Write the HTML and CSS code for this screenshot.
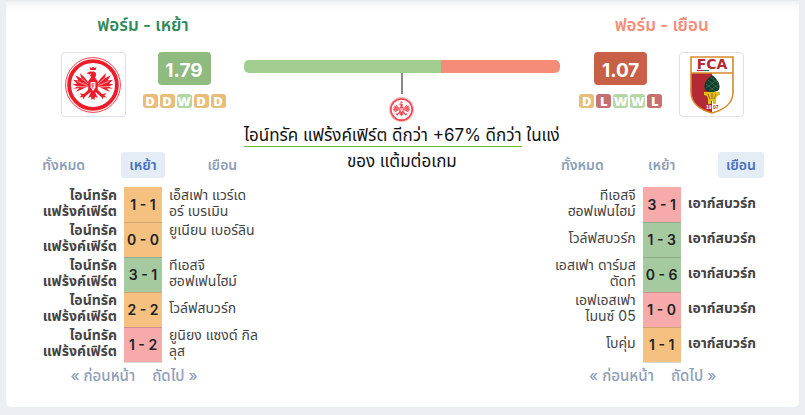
FILE: index.html
```html
<!DOCTYPE html>
<html lang="th">
<head>
  <meta charset="UTF-8" />
  <meta name="viewport" content="width=device-width, initial-scale=1" />
  <title>ฟอร์ม - เหย้า / เยือน</title>
  <link rel="stylesheet" href="styles.css">
</head>
<body>
  <!-- shared club crest -->
  <svg class="sprite" aria-hidden="true">
    <symbol id="crest-sge" viewBox="0 0 56 56">
      <circle cx="28" cy="28" r="27.4" fill="#fff" stroke="#ee2a35" stroke-width="0.9"/>
      <circle cx="28" cy="28" r="23.9" fill="#fff" stroke="#ed1c2b" stroke-width="3.8"/>
      <g fill="#ed1c2b">
        <path d="M24.6 10l1.6 1 1.8-1.3 1.8 1.3 1.6-1-.6 3h-5.6z"/>
        <path d="M21.5 16.2l3.4-1.8h3.6c2 .5 3 2 2.6 3.8l-1 2.5 2.6 3.3v9L28 38l-4.8-5v-9l2.8-3.2-.7-2.6z"/>
        <path d="M23.5 25.5L20 21l-5-5 1.2 5.2-6-2.9 3.2 5.2-5.4-.7 4 3.8-4.3.8 4.8 2.1-4.3 2.2 6-.4-3.4 3.6 6.2-2.6L24 29z"/>
        <path d="M32.5 25.5L36 21l5-5-1.2 5.2 6-2.9-3.2 5.2 5.4-.7-4 3.8 4.3.8-4.8 2.1 4.3 2.2-6-.4 3.4 3.6-6.2-2.6L32 29z"/>
        <path d="M24 32l-5 5-4.6-.8 2.2 2.3-2.4 2.1 3.5-.5.3 2.5 2-2.9 6-5.2z"/>
        <path d="M32 32l5 5 4.6-.8-2.2 2.3 2.4 2.1-3.5-.5-.3 2.5-2-2.9-6-5.2z"/>
        <path d="M26 35l-2.8 6 2.9-1.3.4 3.5 1.5-1.8 1.5 1.8.4-3.5 2.9 1.3L30 35z"/>
      </g>
      <g stroke="#fff" stroke-width="0.6" fill="none">
        <path d="M23 27l-8-7M22.500 28.500l-10-4M22 30l-10-.5M33 27l8-7M33.500 28.500l10-4M34 30l10-.5M23 17.300h3.200"/>
      </g>
      <path d="M25.600 25h4.800v5.500L28 34l-2.400-3.500z" fill="#fff"/>
      <path d="M29.400 26.700h-2.200v5M27.200 28.900h1.800" fill="none" stroke="#ed1c2b" stroke-width="0.8"/>
    </symbol>
  </svg>

  <main class="card">
    <section class="team home">
      <h2 class="title">ฟอร์ม - เหย้า</h2>
      <div class="summary">
        <div class="logo">
          <svg width="56" height="58" role="img" aria-label="ไอน์ทรัค แฟร้งค์เฟิร์ต"><use href="#crest-sge"/></svg>
        </div>
        <div class="rating">
          <div class="points">1.79</div>
          <div class="form">
            <span class="d">D</span><span class="d">D</span><span class="w">W</span><span class="d">D</span><span class="d">D</span>
          </div>
        </div>
      </div>

      <div class="tabs">
        <button type="button">ทั้งหมด</button>
        <button type="button" class="active">เหย้า</button>
        <button type="button">เยือน</button>
      </div>

      <table class="matches">
        <tr><td class="own">ไอน์ทรัค<br>แฟร้งค์เฟิร์ต</td><td class="score draw">1 - 1</td><td>เอ็สเฟา แวร์เด<br>อร์ เบรเมิน</td></tr>
        <tr><td class="own">ไอน์ทรัค<br>แฟร้งค์เฟิร์ต</td><td class="score draw">0 - 0</td><td class="top">ยูเนียน เบอร์ลิน</td></tr>
        <tr><td class="own">ไอน์ทรัค<br>แฟร้งค์เฟิร์ต</td><td class="score win">3 - 1</td><td>ทีเอสจี<br>ฮอฟเฟนไฮม์</td></tr>
        <tr><td class="own">ไอน์ทรัค<br>แฟร้งค์เฟิร์ต</td><td class="score draw">2 - 2</td><td>โวล์ฟสบวร์ก</td></tr>
        <tr><td class="own">ไอน์ทรัค<br>แฟร้งค์เฟิร์ต</td><td class="score loss">1 - 2</td><td>ยูนิยง แซงต์ กิล<br>ลุส</td></tr>
      </table>

      <nav class="pager">
        <a href="#">« ก่อนหน้า</a>
        <a href="#">ถัดไป »</a>
      </nav>
    </section>

    <section class="compare">
      <div class="bar"><div class="bar-home"></div><div class="bar-away"></div></div>
      <div class="marker"></div>
      <svg class="mini" width="25" height="25" aria-hidden="true"><use href="#crest-sge"/></svg>
      <p><span>ไอน์ทรัค แฟร้งค์เฟิร์ต ดีกว่า +67% ดีกว่า</span> ในแง่<br>ของ แต้มต่อเกม</p>
    </section>

    <section class="team away">
      <h2 class="title">ฟอร์ม - เยือน</h2>
      <div class="summary">
        <div class="rating">
          <div class="points">1.07</div>
          <div class="form">
            <span class="d">D</span><span class="l">L</span><span class="w">W</span><span class="w">W</span><span class="l">L</span>
          </div>
        </div>
        <div class="logo">
          <svg width="44" height="58" viewBox="0 0 44 58" role="img" aria-label="เอาก์สบวร์ก">
            <path d="M1 1h42v35c0 11-9 18-21 21C10 54 1 47 1 36z" fill="#fff"/>
            <path d="M1 17h21v40C10 54 1 47 1 36z" fill="#b32a34"/>
            <path d="M1 1h42v35c0 11-9 18-21 21C10 54 1 47 1 36zM1 17h42" fill="none" stroke="#d88a2b" stroke-width="1.600"/>
            <text class="fca" x="22" y="13" text-anchor="middle">FCA</text>
            <path d="M7 14.500h6" stroke="#b32a34" stroke-width="1.200"/>
            <path d="M13 14.500h6" stroke="#168653" stroke-width="1.200"/>
            <path d="M22 19c5 4 8 8 7.500 12.500C29.200 35 26 36 22 36s-7.200-1-7.500-4.500C14 27 17 23 22 19z" fill="#123e2c"/>
            <path d="M18 24l10 8M16 28l9 7M27 24l-11 8M29 28l-10 7M20 21l8 6" stroke="#42745a" stroke-width="0.700"/>
            <path d="M14 36h16v3l-3 1-1 3v5h-3v-3h-2v3h-3v-5l-1-3-3-1z" fill="#e6bd18"/>
            <path d="M18 38l2 5M26 38l-2 5M22 37v6" stroke="#7b5420" stroke-width="0.800"/>
            <text class="year left" x="16" y="53">19</text>
            <text class="year" x="23" y="53">07</text>
          </svg>
        </div>
      </div>

      <div class="tabs">
        <button type="button">ทั้งหมด</button>
        <button type="button">เหย้า</button>
        <button type="button" class="active">เยือน</button>
      </div>

      <table class="matches">
        <tr><td>ทีเอสจี<br>ฮอฟเฟนไฮม์</td><td class="score loss">3 - 1</td><td class="own">เอาก์สบวร์ก</td></tr>
        <tr><td>โวล์ฟสบวร์ก</td><td class="score win">1 - 3</td><td class="own">เอาก์สบวร์ก</td></tr>
        <tr><td>เอสเฟา ดาร์มส<br>ตัดท์</td><td class="score win">0 - 6</td><td class="own">เอาก์สบวร์ก</td></tr>
        <tr><td>เอฟเอสเฟา<br>ไมนซ์ 05</td><td class="score loss">1 - 0</td><td class="own">เอาก์สบวร์ก</td></tr>
        <tr><td>โบคุ่ม</td><td class="score draw">1 - 1</td><td class="own">เอาก์สบวร์ก</td></tr>
      </table>

      <nav class="pager">
        <a href="#">« ก่อนหน้า</a>
        <a href="#">ถัดไป »</a>
      </nav>
    </section>
  </main>
</body>
</html>
```

FILE: styles.css
```css
:root {
  --green: #a2cd91;
  --red: #f58c78;
  --muted: #8e9eb8;
  --bg-color: #ebeff3;
  --font-main: Inter, "Noto Sans Thai", "Noto Sans", sans-serif;
}
* {
  box-sizing: border-box;
}
body {
  margin: 0;
  background-color: var(--bg-color);
  font-family: var(--font-main);
  color: #444;
}
.sprite {
  position: absolute;
  width: 0;
  height: 0;
}
.card {
  display: flex;
  margin: 0 6px 8px;
  padding: 13px 19px 20px 18px;
  background: #fff;
  border-top: 1px solid #e6e8f0;
  border-radius: 0 0 5px 5px;
  box-shadow: inset 0 8px 10px -6px #e9ebf0;
}
.team {
  flex: 0 0 238px;
}
.title {
  margin: 0;
  font-size: 17px;
  line-height: 22px;
  font-weight: 600;
  text-align: center;
}
.home .title {
  color: #2e8b57;
}
.away .title {
  color: var(--red);
}
.summary {
  display: flex;
  justify-content: center;
  gap: 17px;
  height: 65px;
  margin-top: 16px;
}
.logo {
  display: flex;
  align-items: center;
  justify-content: center;
  width: 65px;
  height: 65px;
  border: 1px solid #dddfea;
  border-radius: 4px;
}
.fca {
  font: 700 14px "DejaVu Sans", sans-serif;
  fill: #b32a34;
}
.year {
  font: 700 5px "Liberation Sans", sans-serif;
  fill: #b32a34;
}
.year.left {
  fill: #fff;
}
.rating {
  display: flex;
  flex-direction: column;
  align-items: center;
  gap: 9px;
}
.points {
  width: 53px;
  height: 33px;
  padding-top: 2px;
  border-radius: 4px;
  background: #8fba80;
  color: #fff;
  font-size: 19px;
  line-height: 33px;
  font-weight: 700;
  text-align: center;
}
.away .points {
  background: #c85f47;
}
.form {
  display: flex;
  gap: 2px;
}
.form span {
  width: 15px;
  height: 14px;
  border-radius: 3px;
  color: #fff;
  font: 800 13px/15px "Open Sans", sans-serif;
  text-align: center;
}
.form .d {
  background: #e8bd7a;
}
.form .w {
  background: #b3d7a3;
}
.form .l {
  background: #c87071;
}
.compare {
  flex: 1;
  margin: 46px -17px 0 -18px;
  text-align: center;
}
.bar {
  display: flex;
  height: 13px;
  border-radius: 5px;
  overflow: hidden;
}
.bar-home {
  flex: 0 0 62.500%;
  background: var(--green);
}
.bar-away {
  flex: 1;
  background: var(--red);
}
.marker {
  width: 2px;
  height: 26px;
  margin: -5px auto 3px;
  background: #888;
}
.mini {
  display: block;
  margin: 0 auto;
  opacity: 0.8;
}
.compare p {
  margin: 0;
  color: #111;
  font-size: 17px;
  line-height: 26px;
  white-space: nowrap;
}
.compare span {
  display: inline-block;
  line-height: 22px;
  border-bottom: 1px solid #6cc030;
}
.tabs {
  display: grid;
  grid-template-columns: repeat(3, 1fr);
  justify-items: center;
  margin-top: 35px;
}
.tabs button {
  height: 26px;
  padding: 0 8px;
  border: 0;
  border-radius: 3px;
  background: none;
  color: var(--muted);
  font: 600 14px/26px var(--font-main);
  cursor: pointer;
}
.tabs .active {
  background: #e4ecf6;
  color: #4672bd;
}
.matches {
  width: 100%;
  margin-top: 9px;
  table-layout: fixed;
  border-collapse: collapse;
}
.matches td {
  height: 35px;
  padding: 0 7px 3px;
  font-size: 14px;
  line-height: 16px;
  white-space: nowrap;
}
.matches td:first-child {
  text-align: right;
}
.matches .top {
  vertical-align: top;
}
.matches .own {
  font-weight: 700;
}
.matches .score {
  width: 38px;
  padding: 1px 0 0;
  border-bottom: 1px solid rgba(0, 0, 0, 0.15);
  color: #222;
  font-size: 14px;
  font-weight: 600;
  text-align: center;
}
.score.draw {
  background: #f5c180;
}
.score.win {
  background: #a6ca9f;
}
.score.loss {
  background: #f6aaaa;
}
.pager {
  display: flex;
  justify-content: center;
  gap: 17px;
  margin-top: 2px;
  padding-right: 18px;
}
.pager a {
  color: var(--muted);
  font-size: 15px;
  line-height: 22px;
  font-weight: 500;
  text-decoration: none;
}
```
